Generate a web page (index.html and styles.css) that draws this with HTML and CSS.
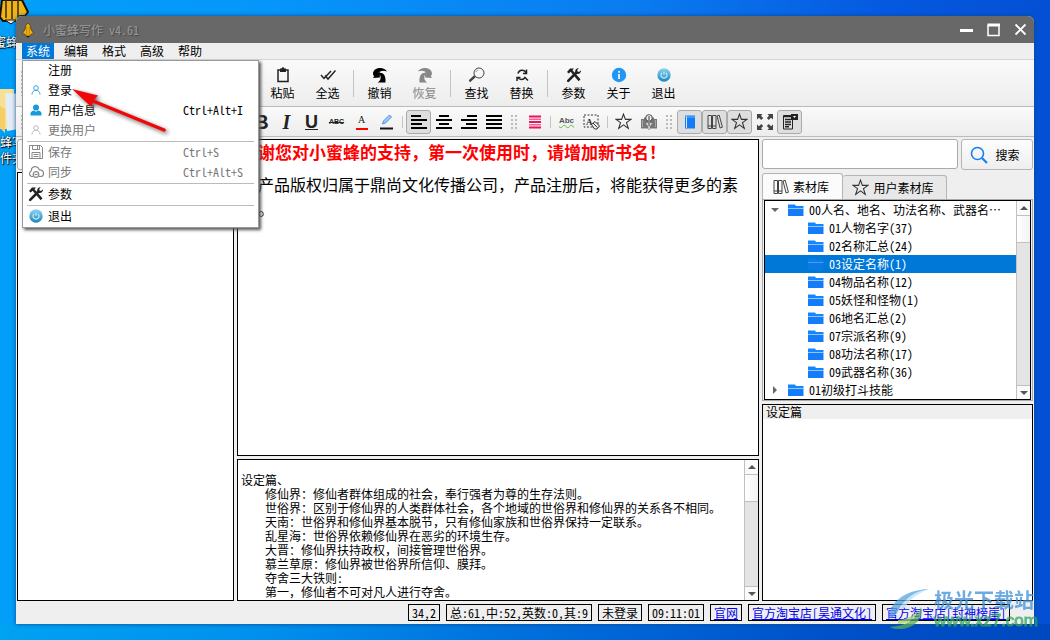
FILE: index.html
```html
<!DOCTYPE html>
<html lang="zh-CN">
<head>
<meta charset="utf-8">
<title>小蜜蜂写作 v4.61</title>
<link rel="stylesheet" href="styles.css">
</head>
<body>
<svg class="defs" width="0" height="0" aria-hidden="true">
  <defs>
    <linearGradient id="orb" x1="0" y1="0" x2="0" y2="1"><stop offset="0" stop-color="#8ed4ee"/><stop offset="1" stop-color="#1a86bb"/></linearGradient>
    <linearGradient id="swoosh" x1="0" y1="0" x2="1" y2="1"><stop offset="0" stop-color="#6db9ee"/><stop offset="1" stop-color="#2f83c8"/></linearGradient>
  </defs>
  <symbol id="bee" viewBox="0 0 14 18"><path d="M7 1l2.500 2.500 1 5L13.500 13l-3 1-1 2h-5l-1-2-3-1 3-4.500 1-5z" fill="#f0b010" stroke="#3a2c08" stroke-width=".7"/><path d="M5.500 5v10M8.500 5v10" stroke="#a87406" stroke-width=".7"/><path d="M5 16l2 2 2-2z" fill="#111"/></symbol>
  <symbol id="tools" viewBox="0 0 16 16"><path d="M2.2 13.8L10 6" stroke="#222" stroke-width="2.6" stroke-linecap="round"/><path d="M13.8 2.2l-2 2.2M9.2 5.2a3.2 3.2 0 0 1 3.6-4l-1.6 1.9.4 1.4 1.4.4L15 3.2a3.2 3.2 0 0 1-4.2 3.5z" fill="#222"/><path d="M1 5l3-3.6h4L6.5 3.2l8 9-1.9 2-8-9.4L2.8 6.6z" fill="#222"/></symbol>
  <symbol id="power" viewBox="0 0 16 16"><circle cx="8" cy="8" r="6.7" fill="url(#orb)"/><path d="M6 5.9a3 3 0 1 0 4 0M8 4.8v3" fill="none" stroke="#cdf0ff" stroke-width="1.1"/></symbol>
  <symbol id="user" viewBox="0 0 12 12"><circle cx="6" cy="4" r="2.3" fill="none" stroke="currentColor"/><path d="M2 10.5C2 7.800 3.700 6.300 6 6.300s4 1.500 4 4.200" fill="none" stroke="currentColor"/></symbol>
  <symbol id="undo" viewBox="0 0 16 16"><path d="M15 4.500C13 .5 7 0 3.500 2.200 .5 4.200 .5 7.500 2.200 9.200L1 11l6.800-.5L8 5 6.300 6.200C7.200 4 11.500 3 15 4.500z" fill="currentColor"/><path d="M6.500 6c5-1.200 7.500 2.500 7 9.500h-8C9 14 10 9 6.500 6z" fill="currentColor"/></symbol>
  <symbol id="star" viewBox="0 0 16 16"><path d="M8 1l1.800 5H15l-4.200 3.100L12.500 14.500 8 11.200l-4.500 3.300 1.700-5.400L1 6h5.200z" fill="none" stroke="#333"/></symbol>
  <symbol id="shelf" viewBox="0 0 16 16"><path d="M1 1.500h3.500v13H1zM5.500 1.500H9v13H5.500zM1 12h8" fill="none" stroke="#444"/><path d="M10 2l2.200-.8 3.200 12-2.300.8z" fill="none" stroke="#444"/></symbol>
  <symbol id="folder" viewBox="0 0 16 12"><path d="M0 .5h7l1 1.500h7.500v2.500H0z" fill="#1485fb"/><path d="M0 5h15.500v7H0z" fill="#147cf8"/><path d="M0 4.500h15.500" stroke="#8fc6ff"/></symbol>
</svg>

<div class="desk-icon desk-app"><svg width="32" height="32" viewBox="0 0 32 32"><path d="M2 0h20l2 4 4 8-3 4h-5l-2 5H3l-3-4z" fill="#f0b414" stroke="#151108" stroke-width="2"/><path d="M6 0v18M12 0v19M18 0v18" stroke="#3a2a06" stroke-width="1.500"/><path d="M5 20l6 4 5-4z" fill="#eee" stroke="#151108"/></svg><span>蜜蜂</span></div>
<div class="desk-icon desk-folder"><svg width="32" height="46" viewBox="0 0 32 46"><path d="M0 1h14v40H0z" fill="#f7df93"/><path d="M5 5l20 1v34l-18 3z" fill="#e4edf5"/><path d="M0 18l5 3v24l-5-5z" fill="#f5ce65"/></svg><span>蜂写</span><span>件夹</span></div>

<main class="window">
  <header class="titlebar">
    <svg width="12" height="16"><use href="#bee"/></svg>
    <h1>小蜜蜂写作 v4.61</h1>
    <div class="win-buttons">
      <button aria-label="最小化"><svg width="14" height="14"><path d="M0 7.500h13" stroke="#fff" stroke-width="3"/></svg></button>
      <button aria-label="最大化"><svg width="14" height="14"><path d="M1 2v10.500h11V2" fill="none" stroke="#fff" stroke-width="1.500"/><path d="M.5 2h12.500" stroke="#fff" stroke-width="3"/></svg></button>
      <button aria-label="关闭"><svg width="14" height="14"><path d="M1.500 1.500l10 10M11.500 1.500l-10 10" stroke="#fff" stroke-width="1.800"/></svg></button>
    </div>
  </header>

  <nav class="menubar">
    <div class="menu-holder">
      <button class="open">系统</button>
      <div class="menu" role="menu">
        <button role="menuitem"><i></i><span>注册</span></button>
        <button role="menuitem"><i><svg class="blue" width="12" height="12"><use href="#user"/></svg></i><span>登录</span></button>
        <button role="menuitem"><i><svg width="12" height="12"><circle cx="6" cy="3.500" r="3" fill="#1799dd"/><path d="M.5 11.500V9.500C.5 7.500 3 6.500 4.500 6.500L6 8l1.500-1.500c2 0 4 1 4 3v2z" fill="#1799dd"/></svg></i><span>用户信息</span><kbd>Ctrl+Alt+I</kbd></button>
        <button role="menuitem" disabled><i><svg class="pale" width="12" height="12"><use href="#user"/></svg></i><span>更换用户</span></button>
        <hr>
        <button role="menuitem" disabled><i><svg width="16" height="16" fill="none" stroke="#888"><path d="M1.500 1.500h11l2 2v11h-13zM4.500 1.500v4h7v-4M9.500 2v3M4 14V8.500h8V14M5.500 10.500h5M5.500 12.500h5"/></svg></i><span>保存</span><kbd>Ctrl+S</kbd></button>
        <button role="menuitem" disabled><i><svg width="16" height="16" fill="none" stroke="#888" stroke-width="1.200"><path d="M5 12.500H3.500a3 3 0 0 1-.3-5.500C3 3.500 6 2 8.500 2.800c1.400.4 2.500 1.500 2.800 3 2.500-.2 4.200 1.500 4.200 3.500 0 1.800-1.200 3.200-3 3.200h-1.500"/><circle cx="8" cy="10.500" r="2.800"/><path d="M6.500 10.500h3"/></svg></i><span>同步</span><kbd>Ctrl+Alt+S</kbd></button>
        <hr>
        <button role="menuitem"><i><svg width="16" height="16"><use href="#tools"/></svg></i><span>参数</span></button>
        <hr>
        <button role="menuitem"><i><svg width="16" height="16"><use href="#power"/></svg></i><span>退出</span></button>
      </div>
    </div>
    <button>编辑</button><button>格式</button><button>高级</button><button>帮助</button>
  </nav>

  <div class="toolbar main-tools">
    <span class="grip lead"></span>
    <button><svg width="16" height="16"><path d="M3 3h10v11.500H3z" fill="none" stroke="#222" stroke-width="1.500"/><path d="M5 1.500h6V5H5z" fill="#222"/><circle cx="8" cy="1.500" r="1.300" fill="#222"/></svg>粘贴</button>
    <button><svg width="16" height="16" fill="none" stroke="#222"><path d="M1 8l3 3.500L11 4" stroke-width="1.500"/><path d="M5 8.500l3 3.500 7.500-8.500" stroke-width="1.500"/></svg>全选</button>
    <span class="sep"></span>
    <button><svg width="16" height="16"><use href="#undo"/></svg>撤销</button>
    <button disabled><svg width="16" height="16"><g transform="matrix(-1 0 0 1 16 0)"><use href="#undo"/></g></svg>恢复</button>
    <span class="sep"></span>
    <button><svg width="18" height="16" fill="none" stroke="#444"><circle cx="11" cy="6" r="5"/><path d="M7.500 9.500l-5.500 5M6.500 8.800l-5 4.500 1 1.500" stroke-width="1.200"/><path d="M8 5a3.500 3.500 0 0 1 2-2" stroke="#999"/></svg>查找</button>
    <button><svg width="16" height="16" fill="none" stroke="#222" stroke-width="1.500"><path d="M12 6A4.200 4.200 0 0 0 4 6.500M3.500 10a4.200 4.200 0 0 0 7.500.5l3 3"/><path d="M12.500 2.500v4H9M3 14v-3.500h3.500"/></svg>替换</button>
    <span class="sep"></span>
    <button><svg width="16" height="16"><use href="#tools"/></svg>参数</button>
    <button><svg width="16" height="16"><circle cx="8" cy="8" r="7.200" fill="#2196f3"/><path d="M8 7v5M8 4v1.800" stroke="#fff" stroke-width="1.600"/></svg>关于</button>
    <button><svg width="16" height="16"><use href="#power"/></svg>退出</button>
  </div>

  <div class="toolbar format-tools">
    <span class="grip lead"></span>
    <button class="bold">B</button>
    <button class="italic">I</button>
    <button class="under">U</button>
    <button class="strike">ABC</button>
    <button class="color">A</button>
    <button aria-label="突出显示"><svg width="16" height="18"><path d="M3.500 11l1-3L10.500 2l2 2-6 6z" fill="#9ccaff" stroke="#4a90e2"/><path d="M1 15.500h13" stroke="#111" stroke-width="2"/></svg></button>
    <span class="sep"></span>
    <button class="on" aria-label="左对齐"><svg width="16" height="16" stroke="#000" stroke-width="2"><path d="M0 2h10M0 6h16M0 10h11M0 14h16"/></svg></button>
    <button aria-label="居中"><svg width="16" height="16" stroke="#000" stroke-width="2"><path d="M3 2h10M0 6h16M3 10h10M0 14h16"/></svg></button>
    <button aria-label="右对齐"><svg width="16" height="16" stroke="#000" stroke-width="2"><path d="M6 2h10M0 6h16M5 10h11M0 14h16"/></svg></button>
    <button aria-label="两端对齐"><svg width="16" height="16" stroke="#000" stroke-width="2"><path d="M0 2h16M0 6h16M0 10h16M0 14h16"/></svg></button>
    <span class="grip"></span>
    <button aria-label="行距"><svg width="14" height="14"><path d="M1 1.500h12M1 7h12M1 12.500h12" stroke="#f0105c" stroke-width="2"/><path d="M1 4.200h12M1 9.800h12" stroke="#f8608f" stroke-width="1.500"/></svg></button>
    <span class="sep"></span>
    <button class="spell">Abc</button>
    <button aria-label="清除格式"><svg width="18" height="16"><path d="M1 1h14v12H1z" fill="none" stroke="#333" stroke-dasharray="2 1.500"/><text x="3" y="11" class="icon-letter">A</text><path d="M8.500 10.500l3.500-3 4.500 4.500-2.500 3h-2.500z" fill="#eee" stroke="#333"/><path d="M10 9l4.500 4.500" stroke="#333"/></svg></button>
    <span class="sep"></span>
    <button aria-label="收藏"><svg width="17" height="17"><use href="#star"/></svg></button>
    <button aria-label="书籍"><svg width="16" height="16"><path d="M0 5h3V3.500h4L8 5l1-1.500h4V5h3v9.500H9.500L8 16l-1.500-1.500H0z" fill="#777"/><path d="M1.500 13V6M14.500 13V6" stroke="#aaa"/><circle cx="8" cy="4" r="3.300" fill="#eee" stroke="#444"/><path d="M8 1v14M5.500 9L8 12l2.500-3" fill="none" stroke="#ddd" stroke-width="1.500"/><path d="M8 2v10" stroke="#444"/></svg></button>
    <span class="grip"></span>
    <button class="on" aria-label="书目"><svg width="14" height="14"><path d="M2 .5h10v13H2z" fill="#147cf5"/><path d="M3.500 1v12" stroke="#fff" stroke-width=".8"/><path d="M2 2h10" stroke="#69b2ff"/></svg></button>
    <button class="on" aria-label="素材"><svg width="16" height="16"><use href="#shelf"/></svg></button>
    <button class="on" aria-label="星标"><svg width="17" height="17"><use href="#star"/></svg></button>
    <button aria-label="全屏"><svg width="18" height="18"><path d="M1 1h5.500L5 2.700l2.200 2.200-2 2L3 4.700 1 6.500zM17 1v5.500l-2-1.800-2.200 2.200-2-2L13 2.700 11.500 1zM1 17v-5.500l2 1.800 2.200-2.200 2 2L5 15.300 6.500 17zM17 17h-5.500l1.500-1.700-2.200-2.200 2-2 2.200 2.200 2-1.800z" fill="#444"/></svg></button>
    <button class="on" aria-label="面板"><svg width="16" height="16"><path d="M1.500 1.500h9v13.500h-9z" fill="none" stroke="#222"/><path d="M1 2.500h9M3 5.500h6M3 8h6M3 10.500h6M3 12.800h4" stroke="#222" stroke-width="1.400"/><path d="M9 0h7v6H9z" fill="#222"/><path d="M11 2h3l-1.500 2z" fill="#fff"/></svg></button>
  </div>

  <div class="workspace">
    <section class="books"><div class="book-title"></div><div class="book-list box"></div></section>
    <section class="center">
      <article class="editor box">
        <h2>谢您对小蜜蜂的支持，第一次使用时，请增加新书名！</h2>
        <p>产品版权归属于鼎尚文化传播公司，产品注册后，将能获得更多的素<br>。</p>
      </article>
      <div class="notes box">
        <div class="notes-text">
          <p>设定篇、</p>
          <p class="in">修仙界：修仙者群体组成的社会，奉行强者为尊的生存法则。</p>
          <p class="in">世俗界：区别于修仙界的人类群体社会，各个地域的世俗界和修仙界的关系各不相同。</p>
          <p class="in">天南：世俗界和修仙界基本脱节，只有修仙家族和世俗界保持一定联系。</p>
          <p class="in">乱星海：世俗界依赖修仙界在恶劣的环境生存。</p>
          <p class="in">大晋：修仙界扶持政权，间接管理世俗界。</p>
          <p class="in">慕兰草原：修仙界被世俗界所信仰、膜拜。</p>
          <p class="in">夺舍三大铁则:</p>
          <p class="in">第一，修仙者不可对凡人进行夺舍。</p>
        </div>
        <div class="scroll"><span class="arrow up"></span><span class="thumb"></span><span class="arrow down"></span></div>
      </div>
    </section>
    <section class="side">
      <form class="search">
        <input type="text" aria-label="搜索">
        <button type="button"><svg width="18" height="18" fill="none" stroke="#1a7ff0"><circle cx="7.500" cy="7.500" r="6" stroke-width="1.600"/><path d="M12 12l5 5" stroke-width="2.200"/></svg>搜索</button>
      </form>
      <div class="tabs">
        <button class="active"><svg width="16" height="16"><use href="#shelf"/></svg>素材库</button>
        <button><svg width="17" height="17"><use href="#star"/></svg>用户素材库</button>
      </div>
      <div class="tree-frame"><div class="tree box">
        <ul>
          <li><b class="tri open"></b><svg width="16" height="12"><use href="#folder"/></svg>00人名、地名、功法名称、武器名…</li>
          <li class="child"><svg width="16" height="12"><use href="#folder"/></svg>01人物名字(37)</li>
          <li class="child"><svg width="16" height="12"><use href="#folder"/></svg>02名称汇总(24)</li>
          <li class="child selected"><svg width="16" height="12"><use href="#folder"/></svg>03设定名称(1)</li>
          <li class="child"><svg width="16" height="12"><use href="#folder"/></svg>04物品名称(12)</li>
          <li class="child"><svg width="16" height="12"><use href="#folder"/></svg>05妖怪和怪物(1)</li>
          <li class="child"><svg width="16" height="12"><use href="#folder"/></svg>06地名汇总(2)</li>
          <li class="child"><svg width="16" height="12"><use href="#folder"/></svg>07宗派名称(9)</li>
          <li class="child"><svg width="16" height="12"><use href="#folder"/></svg>08功法名称(17)</li>
          <li class="child"><svg width="16" height="12"><use href="#folder"/></svg>09武器名称(36)</li>
          <li><b class="tri"></b><svg width="16" height="12"><use href="#folder"/></svg>01初级打斗技能</li>
        </ul>
        <div class="scroll"><span class="arrow up"></span><span class="thumb"></span><span class="arrow down"></span></div>
      </div></div>
      <div class="preview box"><p>设定篇</p></div>
    </section>
  </div>

  <footer class="status">
    <span>34,2</span><span>总:61,中:52,英数:0,其:9</span><span>未登录</span><span>09:11:01</span>
    <a href="#">官网</a><a href="#">官方淘宝店[昊通文化]</a><a href="#">官方淘宝店[封神榜崖]</a>
  </footer>
</main>

<svg class="pointer" width="110" height="56" aria-hidden="true"><path d="M22 14l71 29" stroke="#f00808" stroke-width="3.500" stroke-linecap="round"/><path d="M1 2l26 6.500-4.500 5L20.500 20z" fill="#f00808"/></svg>
<div class="watermark">
  <svg width="46" height="44" viewBox="0 0 46 44"><path d="M1 30C2 14 16 2 41 1 25 5 14 13 9 25c-2 3-5 5-8 5z" fill="url(#swoosh)"/><path d="M11 21C18 9 28 3 41 1 27 7 20 13 17 20z" fill="#bfe0f7"/><path d="M2 39c16-1 27-8 31-20 3 10-5 21-20 22-4 0-8 0-11-2z" fill="#5aae5c"/><path d="M10 32c6 0 14-3 20-9-3 9-11 13-20 13z" fill="#a6d96b"/></svg>
  <div><strong>极光下载站</strong><em>www.xz7.com</em></div>
</div>
</body>
</html>
```
FILE: styles.css
```css
* { box-sizing: border-box; }

body {
  position: relative;
  margin: 0;
  min-height: 100vh;
  padding: 16px;
  display: flex;
  overflow: hidden;
  font: 12px/14px "Noto Sans Mono CJK SC", "Noto Sans CJK SC", monospace;
  color: #000;
  background:
    linear-gradient(90deg, #00a2f2 0, #0090ec 25%, #006fdc 50%, #0050c8 80%, #0048c0 100%) bottom / 100% 16px no-repeat,
    linear-gradient(90deg, #029ff8 0, #0696fa 25%, #0a7cf0 60%, #0558e0 85%, #0450d4 100%);
}
button, input { font: inherit; color: inherit; }
button { border: 0; background: none; padding: 0; }
p, h1, h2, ul { margin: 0; padding: 0; }
svg { flex: none; }
.defs { position: absolute; }

.desk-icon {
  position: absolute;
  left: 0;
  width: 28px;
  display: flex;
  flex-direction: column;
  color: #fff;
  line-height: 16px;
  text-shadow: 1px 1px 1px #000, 0 0 2px #000;
}
.desk-app { top: 0; gap: 2px; }
.desk-app span { margin-left: -6px; }
.desk-folder { top: 88px; }

.window {
  position: relative;
  flex: 1;
  min-width: 0;
  display: flex;
  flex-direction: column;
  background: #efefef;
  border-radius: 6px 6px 0 0;
  box-shadow: 0 0 4px #0a4a8a;
}

.titlebar {
  height: 27px;
  display: flex;
  align-items: center;
  gap: 9px;
  padding: 0 6px;
  background: #686868;
  border-radius: 6px 6px 0 0;
}
.titlebar h1 {
  flex: 1;
  font-size: 12px;
  font-weight: 400;
  color: #9a9a9a;
  text-shadow: 1px 1px 1px #444;
}
.win-buttons { display: flex; gap: 13px; }
.win-buttons button { display: flex; }

.menubar {
  height: 17px;
  display: flex;
  gap: 6px;
  padding-left: 6px;
  border-bottom: 1px solid #d5d5d5;
}
.menubar > button, .menu-holder > button { width: 32px; height: 16px; display: block; }
.menu-holder { position: relative; }
.menu-holder > .open { background: #0078d7; color: #fff; }

.menu {
  position: absolute;
  z-index: 2;
  top: 17px;
  left: 0;
  width: 237px;
  background: #fff;
  border: 1px solid #999;
  box-shadow: 2px 2px 3px #555;
}
.menu button {
  width: 100%;
  height: 20px;
  padding-bottom: 2px;
  display: grid;
  grid-template-columns: 25px 135px 1fr;
  align-items: center;
  text-align: left;
}
.menu button:disabled { color: #777; }
.menu i { display: flex; justify-content: center; }
.menu .blue { color: #3ba4da; }
.menu .pale { color: #bbb; }
.menu kbd { font: inherit; }
.menu hr { margin: 0 4px 1px; border: 0; height: 1px; background: #bbb; }

.toolbar {
  display: flex;
  align-items: center;
  border-bottom: 1px solid #bbb;
  background: linear-gradient(#fafafa, #ededed);
}
.main-tools { height: 47px; }
.main-tools button {
  width: 45px;
  display: flex;
  flex-direction: column;
  align-items: center;
  gap: 3px;
}
.main-tools button:disabled { color: #888; }
.sep { width: 7px; display: flex; justify-content: center; }
.sep::before { content: ""; width: 1px; height: 12px; background: #c4c4c4; }
.main-tools .sep::before { height: 27px; }
.grip {
  width: 16px;
  height: 16px;
  background: radial-gradient(circle, #bbb 1px, transparent 1px) 4px 0 / 4px 4px;
  background-clip: content-box;
  padding: 0 5px;
}
.main-tools .lead { width: 16px; height: 26px; margin-right: 228px; }
.format-tools { height: 30px; }
.format-tools .lead { margin-right: 217px; }
.format-tools button {
  width: 25px;
  height: 24px;
  display: flex;
  align-items: center;
  justify-content: center;
  color: #222;
}
.format-tools .on { border: 1px solid #aaa; border-radius: 3px; background: #dedede; }
.format-tools .bold { font: bold 20px/20px "Liberation Sans", sans-serif; }
.format-tools .italic { font: italic bold 20px/20px "Liberation Serif", serif; }
.format-tools .under { font: bold 18px/20px "Liberation Sans", sans-serif; text-decoration: underline; }
.format-tools .strike { font: bold 7px/10px "Liberation Sans", sans-serif; text-decoration: line-through; }
.format-tools .color { font: 10px/12px "Liberation Serif", serif; padding-bottom: 4px; }
.color::after { content: ""; position: absolute; width: 12px; height: 2px; margin-top: 18px; background: #f00; }
.format-tools .spell { font: bold 8px/10px "Liberation Sans", sans-serif; color: #555; text-decoration: underline wavy #55b93c 1px; text-underline-offset: 1px; padding-bottom: 2px; }
.icon-letter { font: bold 9px "Liberation Serif", serif; fill: #222; }

.workspace {
  flex: 1;
  min-height: 0;
  display: grid;
  grid-template-columns: 217px minmax(0, 1fr) 271px;
  gap: 3px;
  padding: 2px 1px 0;
}
.workspace > section { display: flex; flex-direction: column; min-height: 0; }
.box { border: 1px solid #000; background: #fff; }
.book-title { height: 31px; margin-bottom: 2px; border: 1px solid #aaa; border-radius: 3px; background: #f7f7f7; }
.book-list { flex: 1; }
.center { gap: 3px; }
.editor { flex: 1; min-height: 0; padding: 2px 0 0 20px; }
.editor h2 { font: bold 17px/20px "Noto Sans CJK SC", sans-serif; color: #f00; white-space: nowrap; }
.editor p { margin-top: 10px; font-size: 16px; line-height: 24px; white-space: nowrap; }
.notes { height: 142px; display: flex; }
.notes-text { flex: 1; min-width: 0; padding: 13px 3px 0; white-space: nowrap; overflow: hidden; }
.notes-text .in { padding-left: 24px; }

.scroll {
  width: 14px;
  display: flex;
  flex-direction: column;
  border-left: 1px solid #c0c0c0;
  background: #e4e4e4;
}
.arrow { height: 14px; display: flex; align-items: center; justify-content: center; background: #fafafa; }
.arrow::before { content: ""; border: 4px solid transparent; }
.up::before { border-bottom: 4px solid #555; border-top: 0; }
.down { margin-top: auto; border-top: 1px solid #c0c0c0; }
.down::before { border-top: 4px solid #555; border-bottom: 0; }
.thumb { height: 28px; border: solid #c0c0c0; border-width: 1px 0; background: linear-gradient(90deg, #fff, #f2f2f2); }

.search { display: flex; gap: 3px; height: 31px; }
.search input { flex: 1; min-width: 0; height: 30px; border: 1px solid #aaa; border-radius: 3px; background: #fff; }
.search button {
  width: 72px;
  display: flex;
  align-items: center;
  justify-content: center;
  gap: 7px;
  padding-right: 4px;
  border: 1px solid #b5b5b5;
  border-radius: 3px;
  background: linear-gradient(#fdfdfd, #eee);
}
.tabs { display: flex; align-items: flex-end; margin-top: 3px; }
.tabs button {
  height: 24px;
  width: 104px;
  display: flex;
  align-items: center;
  justify-content: center;
  gap: 4px;
  padding-right: 3px;
  border: 1px solid #b5b5b5;
  border-width: 1px 1px 0 0;
  border-radius: 3px 3px 0 0;
  background: #e8e8e8;
}
.tabs .active { height: 26px; width: 81px; border-left-width: 1px; background: #fbfbfb; }
.tree-frame { border: 1px solid #aaa; padding: 0 1px; }
.tree { display: flex; height: 200px; }
.tree ul { flex: 1; min-width: 0; list-style: none; }
.tree li { height: 18px; display: flex; align-items: center; white-space: nowrap; padding-left: 6px; }
.tree li svg { margin-right: 5px; }
.tree .child { padding-left: 43px; }
.tree .selected { background: #0078d7; color: #fff; }
.tree .selected svg { opacity: .5; }
.tri { width: 17px; display: flex; }
.tri::before { content: ""; margin-left: 2px; border: 4px solid transparent; border-left: 4px solid #666; border-right: 0; }
.tri.open::before { margin-left: 0; border: 4px solid transparent; border-top: 4px solid #666; border-bottom: 0; }
.preview { flex: 1; margin-top: 3px; }
.preview p { padding-left: 3px; background: #efefef; }

.status { height: 23px; display: flex; justify-content: flex-end; align-items: center; gap: 6px; padding: 0 24px 0 0; }
.status > * { height: 17px; line-height: 15px; padding: 0 3px; border: 1px solid #000; white-space: nowrap; }
.status a { color: #00e; text-underline-offset: 1px; text-decoration-skip-ink: none; }

.pointer { position: absolute; z-index: 3; left: 71px; top: 87px; filter: drop-shadow(2px 2px 2px #666); }
.watermark { position: absolute; z-index: 3; right: 12px; bottom: 8px; display: flex; align-items: center; opacity: .75; }
.watermark div { display: flex; flex-direction: column; }
.watermark strong { font: bold 20px/22px "Noto Sans CJK SC", sans-serif; color: #3d8fd8; }
.watermark em { font: 17px/20px "Liberation Sans", sans-serif; color: #35a65e; -webkit-text-stroke: 1px #35a65e; }
```
